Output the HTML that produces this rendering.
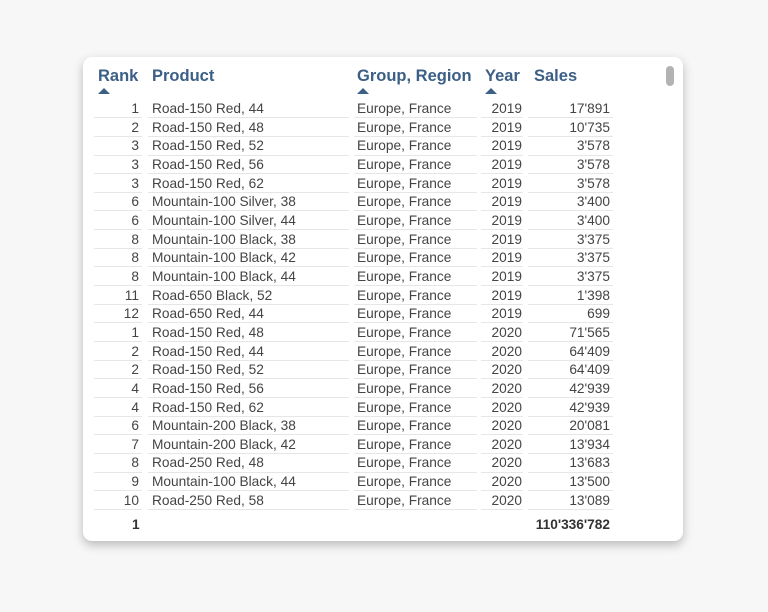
<!DOCTYPE html>
<html><head><style>
body{margin:0;width:768px;height:612px;background:#f7f7f7;font-family:"Liberation Sans",Arial,sans-serif;position:relative;overflow:hidden}
.card{position:absolute;left:83px;top:57px;width:600px;height:484px;background:#fff;border-radius:9px;box-shadow:0 4px 10px rgba(0,0,0,.25)}
.h{position:absolute;top:67px;font-size:16.5px;font-weight:bold;color:#3b5f85}
.ar{position:absolute;top:88px;width:0;height:0;border-left:6px solid transparent;border-right:6px solid transparent;border-bottom:6px solid #3b5f85}
.body{position:absolute;left:0;top:100px;width:768px;height:413px;overflow:hidden}
.r{position:relative;height:18.67px;font-size:13.7px;color:#444}
.r div{position:absolute;top:0;height:17.2px;line-height:17px;border-bottom:1.5px solid #e6e6e6;box-sizing:content-box;white-space:nowrap}
.c1{left:94px;width:45px;padding-right:3px;text-align:right}
.c2{left:148px;width:197px;padding-left:4px}
.c3{left:354px;width:120px;padding-left:3px}
.c4{left:481px;width:41px;text-align:right;padding-right:1px}
.c5{left:528px;width:82px;text-align:right;padding-right:3px}
.tot{position:absolute;top:517px;font-size:13.7px;font-weight:bold;color:#333}
.sb{position:absolute;left:666px;top:66px;width:8px;height:20px;background:#b3b3b3;border-radius:4px}
</style></head><body>
<div class="card"></div>
<div class="h" style="left:98px">Rank</div>
<div class="h" style="left:152px">Product</div>
<div class="h" style="left:357px">Group, Region</div>
<div class="h" style="left:485px">Year</div>
<div class="h" style="left:534px">Sales</div>
<div class="ar" style="left:98px"></div>
<div class="ar" style="left:357px"></div>
<div class="ar" style="left:485px"></div>
<div class="sb"></div>
<div class="body">
<div class="r"><div class="c1">1</div><div class="c2">Road-150 Red, 44</div><div class="c3">Europe, France</div><div class="c4">2019</div><div class="c5">17'891</div></div>
<div class="r"><div class="c1">2</div><div class="c2">Road-150 Red, 48</div><div class="c3">Europe, France</div><div class="c4">2019</div><div class="c5">10'735</div></div>
<div class="r"><div class="c1">3</div><div class="c2">Road-150 Red, 52</div><div class="c3">Europe, France</div><div class="c4">2019</div><div class="c5">3'578</div></div>
<div class="r"><div class="c1">3</div><div class="c2">Road-150 Red, 56</div><div class="c3">Europe, France</div><div class="c4">2019</div><div class="c5">3'578</div></div>
<div class="r"><div class="c1">3</div><div class="c2">Road-150 Red, 62</div><div class="c3">Europe, France</div><div class="c4">2019</div><div class="c5">3'578</div></div>
<div class="r"><div class="c1">6</div><div class="c2">Mountain-100 Silver, 38</div><div class="c3">Europe, France</div><div class="c4">2019</div><div class="c5">3'400</div></div>
<div class="r"><div class="c1">6</div><div class="c2">Mountain-100 Silver, 44</div><div class="c3">Europe, France</div><div class="c4">2019</div><div class="c5">3'400</div></div>
<div class="r"><div class="c1">8</div><div class="c2">Mountain-100 Black, 38</div><div class="c3">Europe, France</div><div class="c4">2019</div><div class="c5">3'375</div></div>
<div class="r"><div class="c1">8</div><div class="c2">Mountain-100 Black, 42</div><div class="c3">Europe, France</div><div class="c4">2019</div><div class="c5">3'375</div></div>
<div class="r"><div class="c1">8</div><div class="c2">Mountain-100 Black, 44</div><div class="c3">Europe, France</div><div class="c4">2019</div><div class="c5">3'375</div></div>
<div class="r"><div class="c1">11</div><div class="c2">Road-650 Black, 52</div><div class="c3">Europe, France</div><div class="c4">2019</div><div class="c5">1'398</div></div>
<div class="r"><div class="c1">12</div><div class="c2">Road-650 Red, 44</div><div class="c3">Europe, France</div><div class="c4">2019</div><div class="c5">699</div></div>
<div class="r"><div class="c1">1</div><div class="c2">Road-150 Red, 48</div><div class="c3">Europe, France</div><div class="c4">2020</div><div class="c5">71'565</div></div>
<div class="r"><div class="c1">2</div><div class="c2">Road-150 Red, 44</div><div class="c3">Europe, France</div><div class="c4">2020</div><div class="c5">64'409</div></div>
<div class="r"><div class="c1">2</div><div class="c2">Road-150 Red, 52</div><div class="c3">Europe, France</div><div class="c4">2020</div><div class="c5">64'409</div></div>
<div class="r"><div class="c1">4</div><div class="c2">Road-150 Red, 56</div><div class="c3">Europe, France</div><div class="c4">2020</div><div class="c5">42'939</div></div>
<div class="r"><div class="c1">4</div><div class="c2">Road-150 Red, 62</div><div class="c3">Europe, France</div><div class="c4">2020</div><div class="c5">42'939</div></div>
<div class="r"><div class="c1">6</div><div class="c2">Mountain-200 Black, 38</div><div class="c3">Europe, France</div><div class="c4">2020</div><div class="c5">20'081</div></div>
<div class="r"><div class="c1">7</div><div class="c2">Mountain-200 Black, 42</div><div class="c3">Europe, France</div><div class="c4">2020</div><div class="c5">13'934</div></div>
<div class="r"><div class="c1">8</div><div class="c2">Road-250 Red, 48</div><div class="c3">Europe, France</div><div class="c4">2020</div><div class="c5">13'683</div></div>
<div class="r"><div class="c1">9</div><div class="c2">Mountain-100 Black, 44</div><div class="c3">Europe, France</div><div class="c4">2020</div><div class="c5">13'500</div></div>
<div class="r"><div class="c1">10</div><div class="c2">Road-250 Red, 58</div><div class="c3">Europe, France</div><div class="c4">2020</div><div class="c5">13'089</div></div>
<div class="r"><div class="c1">11</div><div class="c2">Road-250 Red, 52</div><div class="c3">Europe, France</div><div class="c4">2020</div><div class="c5">12'347</div></div>
</div>
<div class="tot" style="left:132px">1</div>
<div class="tot" style="left:530px;width:80px;text-align:right">110'336'782</div>
</body></html>
